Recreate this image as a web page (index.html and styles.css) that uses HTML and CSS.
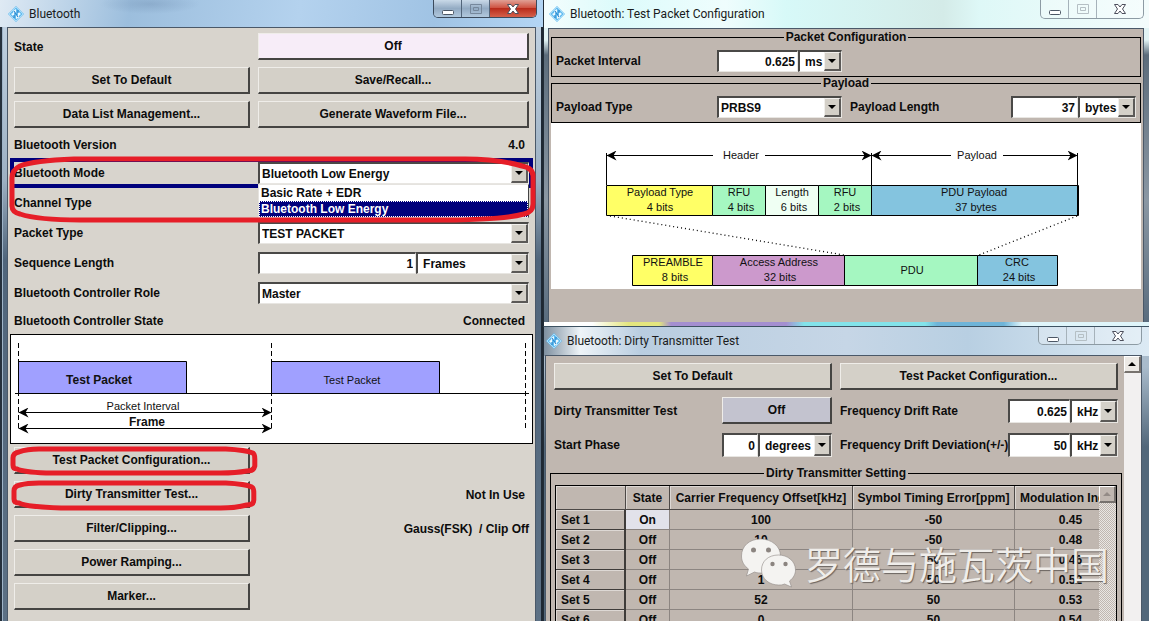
FILE: index.html
```html
<!DOCTYPE html>
<html lang="en">
<head>
<meta charset="utf-8">
<title>Bluetooth</title>
<link rel="stylesheet" href="styles.css">
</head>
<body>
<svg class="defs" aria-hidden="true">
  <symbol id="logo" viewBox="0 0 16 16">
    <path d="M8 0 16 8 8 16 0 8Z" fill="#62bcf0"/>
    <path d="M8 1 15 8 8 15 1 8Z" fill="none" stroke="#a9dbf8"/>
    <path d="M5.500 4.500 8 3v4H5zM10 5.500 13 8l-3 2.500zM3 8l3-1.500V11zM8 9h3v2.500L8 13z" fill="#eefaff"/>
    <path d="M6 5 10 11M10 4v3M6 9v3" stroke="#2b86cc" stroke-width="1.200"/>
  </symbol>
  <symbol id="min" viewBox="0 0 14 12"><rect x="1.500" y="7.500" width="11" height="4" rx="1" fill="#fff" stroke="#4c5765"/></symbol>
  <symbol id="max" viewBox="0 0 14 12"><path d="M1.500 1.500h11v9h-11zM4.500 4.500h5v3h-5z" fill="none" stroke="currentColor"/></symbol>
  <symbol id="close" viewBox="0 0 14 12"><path d="M1.500 1.500h3.500l2 2.500 2-2.500h3.500L9.500 6l3 4.500H9L7 8l-2 2.500H1.500L4.500 6z" fill="#fff" stroke="#4c4f5c"/></symbol>
  <marker id="tip" viewBox="0 0 10 10" refX="10" refY="5" markerWidth="10" markerHeight="10" markerUnits="userSpaceOnUse" orient="auto-start-reverse"><path d="M0 0 10 5 0 10 3 5Z"/></marker>
</svg>
<main class="desktop">
  <section class="window main-window">
    <header class="titlebar">
      <svg class="logo"><use href="#logo"/></svg><h1>Bluetooth</h1>
      <div class="caption active">
        <button aria-label="Minimize"><svg><use href="#min"/></svg></button><button aria-label="Maximize"><svg><use href="#max"/></svg></button><button class="x" aria-label="Close"><svg><use href="#close"/></svg></button>
      </div>
    </header>
    <div class="client">
      <div class="row tall"><span>State</span><button class="btn pink">Off</button></div>
      <div class="row tall"><button class="btn">Set To Default</button><button class="btn">Save/Recall...</button></div>
      <div class="row tall"><button class="btn">Data List Management...</button><button class="btn">Generate Waveform File...</button></div>
      <div class="row short"><span>Bluetooth Version</span><span class="value">4.0</span></div>
      <div class="marked">
        <div class="row focus"><label for="mode">Bluetooth Mode</label>
          <div class="anchor">
            <div class="combo"><select id="mode"><option>Bluetooth Low Energy</option><option>Basic Rate + EDR</option></select><i class="arrow"></i></div>
            <ul class="menu"><li>Basic Rate + EDR</li><li class="selected">Bluetooth Low Energy</li></ul>
          </div>
        </div>
        <div class="row"><span>Channel Type</span></div>
        <svg class="mark" viewBox="0 0 523 60" preserveAspectRatio="none"><path d="M64 1C40 2 20 4 10 8Q2 12 2 20V48Q2 54 10 56C22 60 40 62 70 62H445C480 61 500 60 514 56Q523 54 523 46V18Q523 10 512 8C495 3 475 1 455 1Z"/></svg>
      </div>
      <div class="row"><label for="ptype">Packet Type</label><div class="combo"><select id="ptype"><option>TEST PACKET</option></select><i class="arrow"></i></div></div>
      <div class="row"><label for="seq">Sequence Length</label><div class="pair seq"><input id="seq" value="1"><div class="combo unit"><select aria-label="Sequence unit"><option>Frames</option></select><i class="arrow"></i></div></div></div>
      <div class="row"><label for="role">Bluetooth Controller Role</label><div class="combo"><select id="role"><option>Master</option></select><i class="arrow"></i></div></div>
      <div class="row short"><span>Bluetooth Controller State</span><span class="value">Connected</span></div>
      <div class="frame-chart">
        <svg viewBox="1 1 521 108" role="img" aria-label="Packet timing">
          <g fill="#a0a0ff" stroke="#000"><path d="M8.500 27.500h168v32h-168zM261.500 27.500h168v32h-168z"/></g>
          <path d="M5 59.500H519" stroke="#000"/>
          <path d="M8.500 9v88M261.500 9v88M515.500 9v88" stroke="#000" stroke-dasharray="5 3"/>
          <path class="dim" d="M8.500 78.500H261.500"/><path class="dim" d="M8.500 94.500H261.500"/>
          <text class="b" x="89" y="50">Test Packet</text><text x="342" y="50">Test Packet</text>
          <text x="133" y="76">Packet Interval</text><text class="b" x="137" y="92">Frame</text>
        </svg>
      </div>
      <div class="row tall ringed"><button class="btn">Test Packet Configuration...</button>
        <svg class="ring" viewBox="0 0 246 28" preserveAspectRatio="none"><path d="M28 2H215Q235 3 242 6Q244 7 244 12V19Q243 24 236 24Q225 26 210 26H35Q12 25 6 22Q2 22 2 18V11Q2 6 8 5Q16 2 28 2Z"/></svg></div>
      <div class="row tall ringed"><button class="btn">Dirty Transmitter Test...</button><span class="value">Not In Use</span>
        <svg class="ring" viewBox="0 0 246 28" preserveAspectRatio="none"><path d="M28 2H215Q235 3 241 6Q243 7 243 12V19Q243 24 236 24Q225 27 210 27H50Q16 26 8 22Q3 22 3 18V10Q3 5 9 4Q16 2 28 2Z"/></svg></div>
      <div class="row tall"><button class="btn">Filter/Clipping...</button><span class="value wide">Gauss(FSK)&nbsp; / Clip Off</span></div>
      <div class="row tall"><button class="btn">Power Ramping...</button></div>
      <div class="row tall"><button class="btn">Marker...</button></div>
    </div>
  </section>

  <div class="stack">
    <section class="window packet-window">
      <header class="titlebar">
        <svg class="logo"><use href="#logo"/></svg><h2>Bluetooth: Test Packet Configuration</h2>
        <div class="caption">
          <button aria-label="Minimize"><svg><use href="#min"/></svg></button><button aria-label="Maximize"><svg><use href="#max"/></svg></button><button class="x" aria-label="Close"><svg><use href="#close"/></svg></button>
        </div>
      </header>
      <div class="client">
        <fieldset class="group"><legend>Packet Configuration</legend>
          <div class="halves"><div class="field"><label for="interval">Packet Interval</label><div class="pair"><input id="interval" value="0.625"><div class="combo unit ms"><select aria-label="Interval unit"><option>ms</option></select><i class="arrow"></i></div></div></div></div>
        </fieldset>
        <fieldset class="group"><legend>Payload</legend>
          <div class="halves">
            <div class="field"><label for="pay">Payload Type</label><div class="combo"><select id="pay"><option>PRBS9</option></select><i class="arrow"></i></div></div>
            <div class="field"><label for="len">Payload Length</label><div class="pair"><input id="len" value="37"><div class="combo unit bytes"><select aria-label="Length unit"><option>bytes</option></select><i class="arrow"></i></div></div></div>
          </div>
        </fieldset>
        <div class="packet-chart">
          <svg viewBox="0 0 590 166" role="img" aria-label="Packet structure">
            <g stroke="#000">
              <path fill="#ffff66" d="M55.500 62.500h106v30h-106zM81.500 132.500h80v30h-80z"/>
              <path fill="#a5f7c1" d="M161.500 62.500h53v30h-53zM267.500 62.500h53v30h-53zM293.500 132.500h133v30h-133z"/>
              <path fill="#effff3" d="M214.500 62.500h53v30h-53z"/>
              <path fill="#84c4df" d="M320.500 62.500h207v30h-207zM426.500 132.500h80v30h-80z"/>
              <path fill="#cc99cc" d="M161.500 132.500h132v30h-132z"/>
              <path fill="none" d="M55.500 30v32M320.500 30v32M526.500 30v62"/>
              <path fill="none" stroke-dasharray="1 3" stroke-width="1.300" d="M59 93 293 132M526 93 428 132"/>
            </g>
            <path class="start" d="M55.500 32.500H162"/><path class="end" d="M214 32.500H320.500"/>
            <path class="start" d="M320.500 32.500H400"/><path class="end" d="M452 32.500H526.500"/>
            <text x="190" y="36">Header</text><text x="426" y="36">Payload</text>
            <text x="109" y="73">Payload Type</text><text x="109" y="88">4 bits</text>
            <text x="188" y="73">RFU</text><text x="190" y="88">4 bits</text>
            <text x="241" y="73">Length</text><text x="243" y="88">6 bits</text>
            <text x="294" y="73">RFU</text><text x="296" y="88">2 bits</text>
            <text x="423" y="73">PDU Payload</text><text x="425" y="88">37 bytes</text>
            <text x="122" y="143">PREAMBLE</text><text x="124" y="158">8 bits</text>
            <text x="228" y="143">Access Address</text><text x="229" y="158">32 bits</text>
            <text x="361" y="151">PDU</text>
            <text x="466" y="143">CRC</text><text x="468" y="158">24 bits</text>
          </svg>
        </div>
      </div>
    </section>

    <section class="window dirty-window">
      <header class="titlebar">
        <svg class="logo"><use href="#logo"/></svg><h2>Bluetooth: Dirty Transmitter Test</h2>
        <div class="caption">
          <button aria-label="Minimize"><svg><use href="#min"/></svg></button><button aria-label="Maximize"><svg><use href="#max"/></svg></button><button class="x" aria-label="Close"><svg><use href="#close"/></svg></button>
        </div>
      </header>
      <div class="client">
        <div class="page">
          <div class="halves"><button class="btn">Set To Default</button><button class="btn">Test Packet Configuration...</button></div>
          <div class="halves">
            <div class="field"><span>Dirty Transmitter Test</span><button class="btn lilac">Off</button></div>
            <div class="field"><label for="rate">Frequency Drift Rate</label><div class="pair"><input id="rate" value="0.625"><div class="combo unit khz"><select aria-label="Rate unit"><option>kHz</option></select><i class="arrow"></i></div></div></div>
          </div>
          <div class="halves">
            <div class="field"><label for="phase">Start Phase</label><div class="pair"><input id="phase" value="0"><div class="combo unit deg"><select aria-label="Phase unit"><option>degrees</option></select><i class="arrow"></i></div></div></div>
            <div class="field"><label for="dev">Frequency Drift Deviation(+/-)</label><div class="pair"><input id="dev" value="50"><div class="combo unit khz"><select aria-label="Deviation unit"><option>kHz</option></select><i class="arrow"></i></div></div></div>
          </div>
          <fieldset class="group settings"><legend>Dirty Transmitter Setting</legend>
            <div class="grid">
              <div class="view">
                <table>
                  <colgroup><col class="c1"><col class="c2"><col class="c3"><col class="c4"><col class="c5"></colgroup>
                  <thead><tr><th></th><th>State</th><th>Carrier Frequency Offset[kHz]</th><th>Symbol Timing Error[ppm]</th><th>Modulation Index</th></tr></thead>
                  <tbody>
                    <tr><th>Set 1</th><td class="on">On</td><td>100</td><td>-50</td><td>0.45</td></tr>
                    <tr><th>Set 2</th><td>Off</td><td>10</td><td>-50</td><td>0.48</td></tr>
                    <tr><th>Set 3</th><td>Off</td><td>1</td><td>50</td><td>0.46</td></tr>
                    <tr><th>Set 4</th><td>Off</td><td>1</td><td>50</td><td>0.52</td></tr>
                    <tr><th>Set 5</th><td>Off</td><td>52</td><td>50</td><td>0.53</td></tr>
                    <tr><th>Set 6</th><td>Off</td><td>0</td><td>50</td><td>0.54</td></tr>
                  </tbody>
                </table>
              </div>
              <div class="scroll dither"><button class="up" aria-label="Scroll table up" disabled></button></div>
            </div>
          </fieldset>
        </div>
        <div class="scroll"><button class="up" aria-label="Scroll up"></button></div>
      </div>
      <div class="watermark">
        <svg viewBox="0 0 56 50">
          <g fill="#f4f3f1" stroke="#8e8884" stroke-width=".6">
            <path d="M20 1C9 1 1 8 1 18c0 6 3 10 7 13l-2 7 8-4c2 1 5 1 8 1 10-1 18-8 18-17C40 8 31 1 20 1Z"/>
            <path d="M38 17c-10 0-17 6-17 15s8 15 17 15c2 0 4 0 6-1l7 3-2-6c4-3 6-7 6-11 0-9-8-15-17-15Z"/>
          </g>
          <g fill="#8b8480"><circle cx="13" cy="12" r="2.500"/><circle cx="28" cy="12" r="2.500"/><circle cx="32" cy="26" r="2.200"/><circle cx="45" cy="26" r="2.200"/></g>
        </svg>
        <span lang="zh">罗德与施瓦茨中国</span>
      </div>
    </section>
  </div>
</main>
</body>
</html>
```

FILE: styles.css
```css
* { box-sizing: border-box; }
body {
  margin: 0;
  font: bold 12px/14px "Liberation Sans", Arial, sans-serif;
  color: #0c0c0c;
  background: #4d6073;
}
button, input, select { font: inherit; color: inherit; margin: 0; padding: 0; border-radius: 0; }
.defs { position: absolute; width: 0; height: 0; }

.desktop { display: grid; grid-template-columns: 543fr 606fr; height: 100vh; overflow: hidden; }
.stack { display: grid; grid-template-rows: auto minmax(0, 1fr); min-width: 0; }
.window { display: flex; flex-direction: column; position: relative; min-width: 0; }
.titlebar { display: flex; align-items: center; flex: none; }
.titlebar h1, .titlebar h2 {
  flex: 1; margin: 0 0 0 5px;
  font: 12px/16px Roboto, "Open Sans", sans-serif;
  white-space: nowrap; color: #1a1c20;
}
.logo { width: 16px; height: 16px; flex: none; }
.client { flex: 1; border: 1px solid #4a5868; border-bottom: 0; min-height: 0; }

.caption {
  display: flex; align-self: flex-start; height: 18px;
  border: 1px solid #8d9ba4; border-top: 0; border-radius: 0 0 5px 5px; overflow: hidden;
  color: #b5bfc4;
}
.caption button {
  width: 28px; border: 0; border-right: 1px solid #a6b2ba; background: #ffffff40;
  display: flex; align-items: center; justify-content: center;
}
.caption svg { width: 14px; height: 12px; }
.caption .x { width: 46px; border: 0; }
.caption.active { border-color: #3b4a5c; color: #76889c; }
.caption.active button { border-color: #52657a; background: linear-gradient(#c9d9e8, #93abc3 50%, #b1c8dd); }
.caption.active .x { background: linear-gradient(#e0a095, #cf5443 45%, #b92c1c 50%, #d5604a); }

.btn {
  height: 27px; width: 100%; margin-bottom: 1px;
  background: #d4d0c8;
  border: solid; border-width: 1px 2px 2px 1px; border-color: #efede9 #454442 #454442 #efede9;
  text-align: center;
}
.pink { background: #f7edf8; }
.lilac { background: #c3c3cf; }

input, .combo {
  height: 22px; min-width: 0; width: 100%; background: #fff;
  border: solid; border-width: 2px 1px 1px 2px; border-color: #4a4947 #e8e6e2 #e8e6e2 #4a4947;
}
input { text-align: right; padding-right: 2px; outline: 0; }
.combo { display: grid; grid-template-columns: 1fr 17px; }
.combo select {
  grid-area: 1 / 1 / 2 / 3; appearance: none; border: 0; background: none; outline: 0;
  padding-left: 2px; min-width: 0; width: 100%;
}
.unit select { padding-left: 5px; }
.arrow {
  grid-area: 1 / 2; pointer-events: none;
  display: flex; align-items: center; justify-content: center;
  background: #d4d0c8; border: solid; border-width: 1px 2px 2px 1px; border-color: #f1efec #5b5957 #5b5957 #f1efec;
}
.arrow::before, .up::before { content: ""; border: 4px solid transparent; border-top-color: #000; border-bottom: 0; }
.pair { display: grid; grid-template-columns: minmax(0, 1fr) auto; }
.ms { width: 44px; }
.bytes { width: 58px; }
.khz { width: 48px; }
.deg { width: 74px; }

/* main window */
.main-window {
  padding: 0 7px;
  background:
    radial-gradient(ellipse 50px 10px at 150px 4px, #6e8cae60, transparent),
    linear-gradient(90deg, #25303c 0 2px, #9fb4c8 2px 3px, transparent 3px calc(100% - 2px), #1e2833 calc(100% - 2px)) 0 27px no-repeat,
    linear-gradient(100deg, #dfeaf4 0, #9cbedd 24%, #b4d2ee 55%, #a0c3e4 80%, #b3d5f4) 0 0 / 100% 27px no-repeat,
    linear-gradient(#c5d6e6 0, #9db0c2 180px, #50657b 260px, #5d7185);
}
.main-window .titlebar { height: 27px; padding-left: 1px; }
.main-window .caption { margin-right: -1px; }
.main-window .client { padding: 2px 2px 0; background: #d8d4cd; }
.row {
  display: grid; grid-template-columns: minmax(0, 236fr) minmax(0, 271fr); gap: 8px; align-items: center;
  height: 30px; padding: 0 4px; position: relative;
}
.tall { height: 34px; }
.short { height: 26px; }
.focus { border: 4px solid #00007c; padding: 0; }
.value { text-align: right; padding-right: 4px; }
.wide { padding-right: 0; }
.seq { grid-template-columns: minmax(0, 7fr) minmax(0, 5fr); }
.marked, .anchor { position: relative; }
.mark, .ring { position: absolute; overflow: visible; pointer-events: none; fill: none; stroke: #e61e28; stroke-width: 5; z-index: 3; }
.mark { inset: 0; width: 100%; height: 100%; }
.ring { left: 1px; top: 3px; width: 47%; height: 28px; }
.menu {
  position: absolute; z-index: 2; left: 0; right: 0; top: 100%;
  margin: 0; padding: 0; list-style: none; background: #fff; border: 1px solid #e5e3df; border-right-color: #444;
}
.menu li { padding: 0 2px; line-height: 16px; }
.menu .selected { background: #00007c; color: #fff; outline: 1px dotted #fff; outline-offset: -1px; }
.frame-chart { height: 110px; border: 1px solid #000; background: #fff; }
.frame-chart svg, .packet-chart svg { display: block; width: 100%; height: 100%; }
text { font-size: 11px; font-weight: normal; text-anchor: middle; fill: #111; }
text.b { font-size: 12px; font-weight: bold; }
.dim, .start, .end { stroke: #000; }
.dim, .start { marker-start: url(#tip); }
.dim, .end { marker-end: url(#tip); }

/* packet window */
.packet-window {
  padding: 0 5px 4px 4px;
  background:
    linear-gradient(90deg, #fff 8%, #e4e67e 14% 19%, #a48fd0 21% 40%, #83e3ea 43% 63%, #6fb4d8 65% 76%, #dff5fa 79%) 0 100% / 100% 4px no-repeat,
    linear-gradient(90deg, #f4fdfd, #dcfbfb 12%, #effdfd 30%, #d7f9f8 40%, #d4ebe8 66%, #def8f7 72%, #f3fcfc) 0 0 / 100% 28px no-repeat,
    linear-gradient(#e2f4f5 40px, #5c6c7b 55px, #8a97a3 200px, #586b7d);
  border-left: 1px solid #222c36;
}
.packet-window .titlebar { height: 28px; padding-left: 1px; }
.packet-window .caption { height: 19px; }
.packet-window .client { padding: 2px 2px 33px; }
.packet-window .client, .dirty-window .client { background: #c0b7b0; }
.group { margin: 0; padding: 7px 4px 4px; border: 1px solid #000; min-width: 0; }
.group legend { margin: 0 auto; padding: 0 2px; line-height: 12px; }
.halves { display: grid; grid-template-columns: repeat(2, minmax(0, 1fr)); gap: 8px; align-items: center; }
.field { display: grid; grid-template-columns: minmax(0, 1fr) 125px; align-items: center; white-space: nowrap; }
.packet-chart { height: 166px; background: #fff; }

/* dirty transmitter window */
.dirty-window {
  padding: 0 7px 0 1px; border-left: 1px solid #222c36; overflow: hidden;
  background:
    linear-gradient(90deg, #7e8f9f, #eef4f8 6%, #b9cde0 16%, #c6d6e6 50%, #b8cfe2 70%, #dceaf4) 0 0 / 100% 29px no-repeat,
    linear-gradient(#a9bbcb 40px, #52677a 120px);
  border-top: 1px solid #3d5262;
}
.dirty-window .titlebar { height: 28px; padding-left: 1px; }
.dirty-window .client { display: flex; }
.page { flex: 1; min-width: 0; padding: 4px 2px 0 4px; }
.page .halves { height: 34px; padding: 0 4px; }
.page .field { grid-template-columns: minmax(0, 1fr) 110px; }
.page input, .page .combo { height: 24px; }
.scroll { width: 17px; flex: none; background: #f2f0f0; }
.up {
  display: flex; align-items: center; justify-content: center; width: 100%; height: 17px;
  background: #ece9e5; border: solid; border-width: 1px 2px 2px 1px; border-color: #fff #77726e #77726e #fff;
}
.up::before { transform: rotate(180deg); }
.dither { background: repeating-conic-gradient(#c0b7b0 0 25%, #e9e6e3 0 50%) 0 0 / 2px 2px; }
.dither .up { background: #c0b7b0; }
.dither .up::before { border-top-color: #938b86; }
.settings { margin-top: 5px; padding-top: 6px; }
.grid { display: flex; border: 1px solid #000; border-bottom: 0; }
.view { flex: 1; min-width: 0; overflow: hidden; }
table { table-layout: fixed; width: 100%; min-width: 571px; border-collapse: separate; border-spacing: 0; }
.c1 { width: 70px; }
.c2 { width: 44px; }
.c3 { width: 183px; }
.c4 { width: 162px; }
th, td { height: 20px; padding: 0; text-align: center; border: solid #8c8581; border-width: 0 1px 1px 0; white-space: nowrap; }
thead th { height: 24px; border-color: #4c4846; box-shadow: inset 1px 1px #ddd8d4; }
thead th:last-child { text-align: left; padding-left: 5px; }
tbody th { text-align: left; padding-left: 5px; border-color: #3f3c3a; border-right-width: 2px; box-shadow: inset 1px 1px #ddd8d4; }
.on { background: #e2e2ea; }
.watermark {
  position: absolute; right: 40px; top: 211px; display: flex; align-items: center; gap: 8px; pointer-events: none;
  font: 350 38px/48px "Noto Sans CJK SC", sans-serif; color: #efedea; white-space: nowrap;
  text-shadow: 1px 1px 1px #6b6460;
}
.watermark svg { width: 57px; height: 50px; }
```
